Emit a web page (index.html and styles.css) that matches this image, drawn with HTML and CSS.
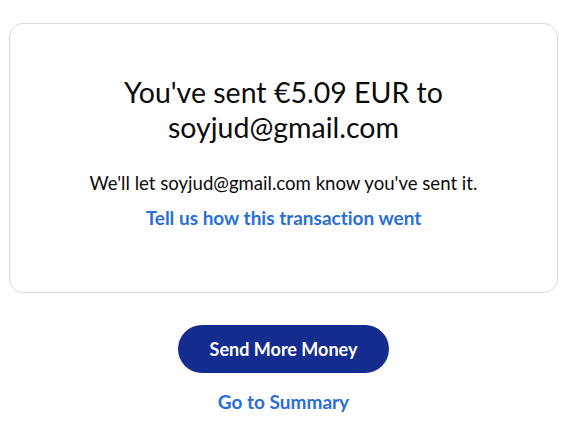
FILE: index.html
```html
<!DOCTYPE html>
<html lang="en">
<head>
<meta charset="utf-8">
<title>Payment sent</title>
<link rel="stylesheet" href="styles.css">
</head>
<body>
<main class="page">
  <section class="card">
    <h1 class="title">You've sent €5.09 EUR to<br>soyjud@gmail.com</h1>
    <p class="note">We'll let soyjud@gmail.com know you've sent it.</p>
    <a class="link feedback" href="#">Tell us how this transaction went</a>
  </section>
  <div class="actions">
    <a class="btn" href="#">Send More Money</a>
    <a class="link summary" href="#">Go to Summary</a>
  </div>
</main>
</body>
</html>
```

FILE: styles.css
```css
html, body {
  margin: 0;
  padding: 0;
  background: #ffffff;
}
body {
  font-family: Lato, "Noto Sans", sans-serif;
  color: #0b0b0b;
  font-variant-ligatures: none;
}
.page {
  padding: 23px 26px 0 9px;
}
.card {
  border: 1px solid #d9d9d9;
  border-radius: 14px;
  height: 270px;
  display: flex;
  flex-direction: column;
  align-items: center;
  padding-top: 51px;
  box-sizing: border-box;
  text-align: center;
}
.title {
  margin: 0;
  font-size: 28.5px;
  font-weight: 400;
  line-height: 35px;
}
.note {
  margin: 26px 0 0;
  font-size: 18.6px;
  line-height: 24px;
}
.link {
  color: #2a6ed8;
  font-weight: 700;
  font-size: 19px;
  text-decoration: none;
  line-height: 24px;
}
.feedback {
  margin-top: 11px;
}
.actions {
  display: flex;
  flex-direction: column;
  align-items: center;
  padding-top: 32px;
}
.btn {
  display: flex;
  align-items: center;
  justify-content: center;
  width: 211px;
  height: 48px;
  border-radius: 24px;
  background: #142c8e;
  color: #ffffff;
  font-weight: 700;
  font-size: 18px;
  text-decoration: none;
}
.summary {
  margin-top: 17px;
}
```
